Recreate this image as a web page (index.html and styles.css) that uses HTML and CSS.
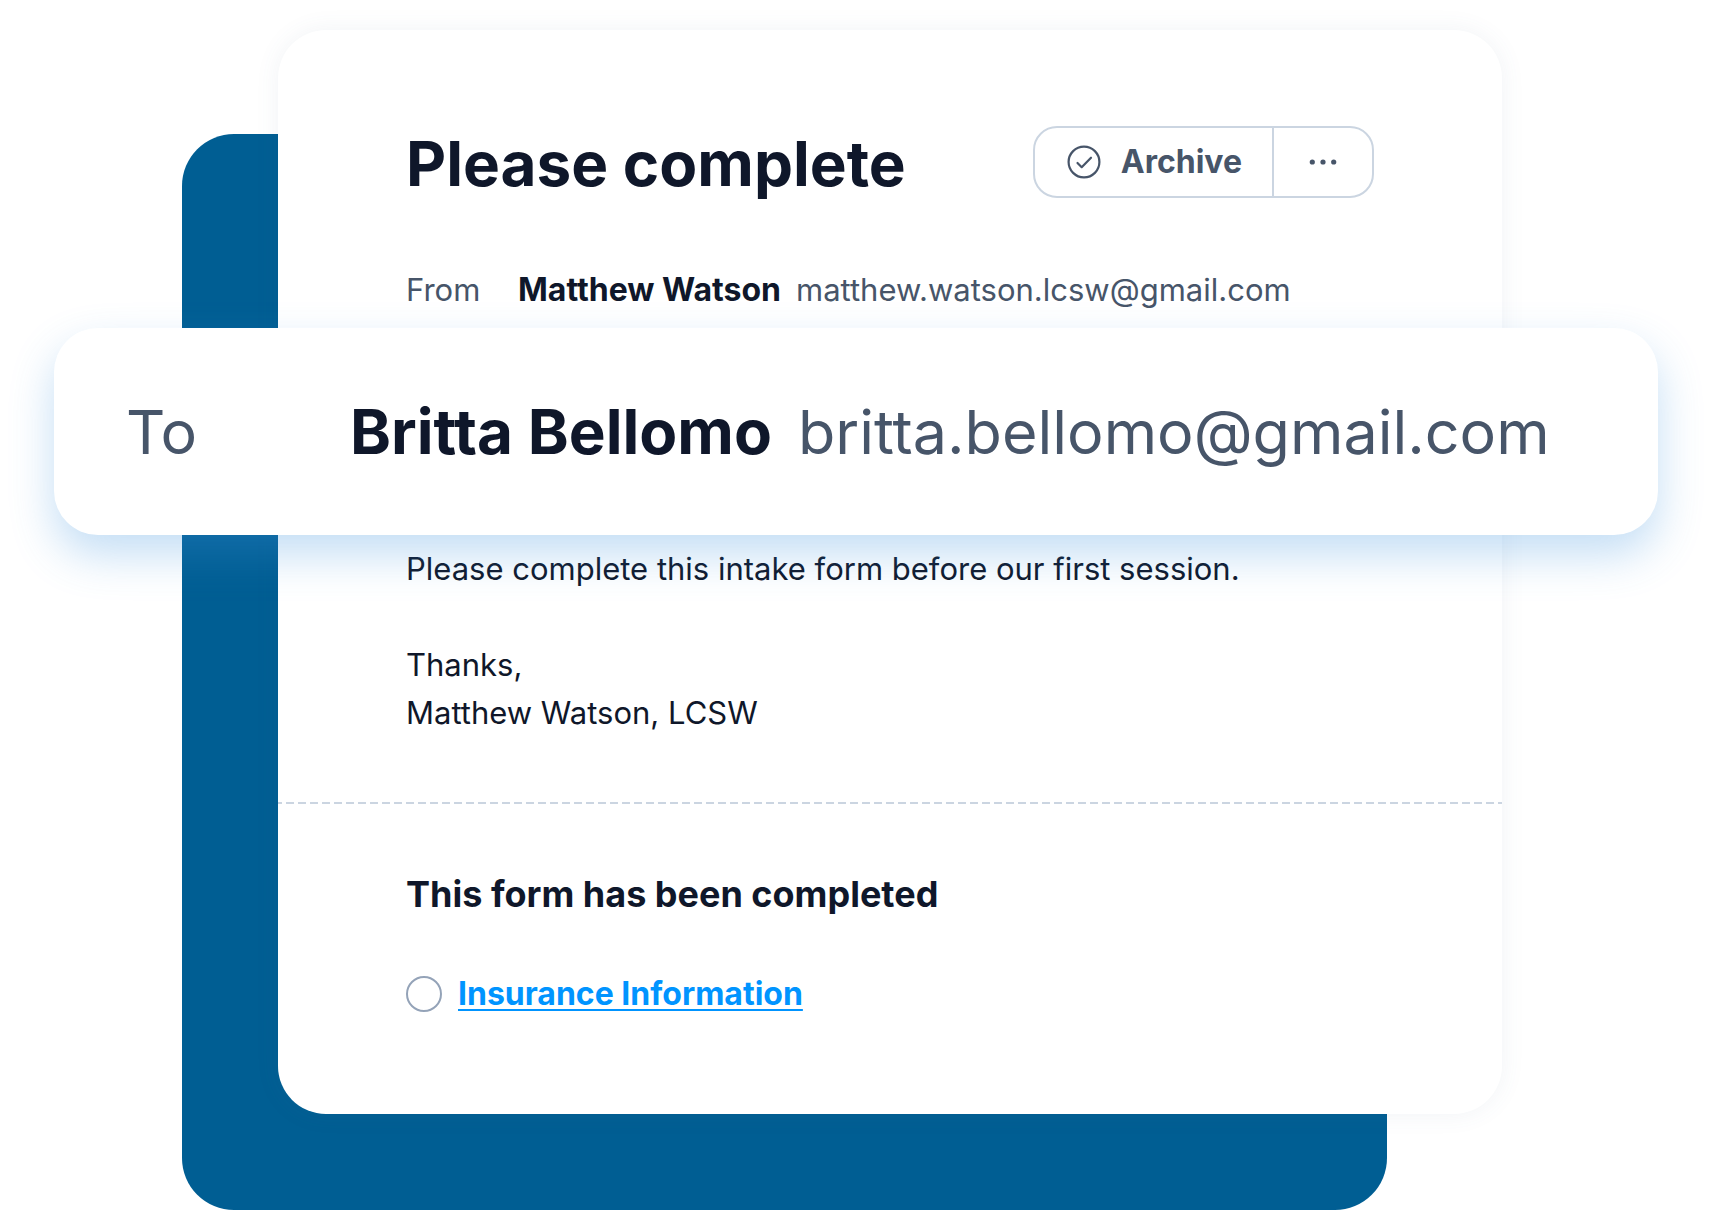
FILE: index.html
```html
<!DOCTYPE html>
<html lang="en">
<head>
  <meta charset="UTF-8">
  <meta name="viewport" content="width=device-width, initial-scale=1.0">
  <title>Please complete</title>
  <link rel="stylesheet" href="styles.css">
</head>
<body>
  <main class="scene">
    <div class="backdrop"></div>

    <article class="card">
      <header class="card-header">
        <h1 class="title">Please complete</h1>
        <div class="actions">
          <button type="button" class="action archive">
            <svg class="icon" viewBox="0 0 34 34" fill="none" stroke="currentColor" stroke-width="2.2" stroke-linecap="round" stroke-linejoin="round" aria-hidden="true">
              <circle cx="17" cy="17" r="15.4"/>
              <path d="M10.5 18l4.2 4.2L24 12.7"/>
            </svg>
            Archive
          </button>
          <button type="button" class="action more" aria-label="More actions">
            <svg class="icon" viewBox="0 0 34 34" fill="currentColor" aria-hidden="true">
              <circle cx="6.3" cy="17" r="2.6"/>
              <circle cx="17" cy="17" r="2.6"/>
              <circle cx="27.7" cy="17" r="2.6"/>
            </svg>
          </button>
        </div>
      </header>

      <div class="person from">
        <span class="label">From</span>
        <strong class="name">Matthew Watson</strong>
        <span class="email">matthew.watson.lcsw@gmail.com</span>
      </div>

      <div class="person to">
        <span class="label">To</span>
        <strong class="name">Britta Bellomo</strong>
        <span class="email">britta.bellomo@gmail.com</span>
      </div>

      <div class="message">
        <p>Please complete this intake form before our first session.</p>
        <p>Thanks,<br>Matthew Watson, LCSW</p>
      </div>

      <svg class="divider" aria-hidden="true">
        <line x1="0" y1="1" x2="100%" y2="1"/>
      </svg>

      <section class="form-status">
        <h2 class="subtitle">This form has been completed</h2>
        <div class="form-item">
          <input type="radio" class="radio" aria-labelledby="form-link">
          <a href="#" id="form-link" class="form-link">Insurance Information</a>
        </div>
      </section>
    </article>
  </main>
</body>
</html>
```
FILE: styles.css
```css
* {
  box-sizing: border-box;
}

body {
  margin: 0;
  background-color: #fff;
  color: #0f172a;
  font-family: Inter, "Liberation Sans", sans-serif;
  font-size: 31px;
  line-height: 48px;
}

h1, h2, p {
  margin: 0;
}

/* The panel and the card share one grid cell */
.scene {
  display: grid;
}

.backdrop,
.card {
  grid-area: 1 / 1;
}

.backdrop {
  margin: 134px 327px 0 182px;
  border-radius: 52px;
  background-color: #005e93;
}

.card {
  margin: 30px 212px 96px 278px;
  padding: 96px 0;
  border-radius: 48px;
  background-color: #fff;
  box-shadow: 0 0 24px rgba(71, 105, 145, 0.08);
}

/* Header */
.card-header {
  display: flex;
  justify-content: space-between;
  align-items: center;
  padding: 0 128px;
}

.title {
  padding-top: 4px;
  font-size: 62px;
  line-height: 68px;
}

.actions {
  display: flex;
  border: 2px solid #cbd5e1;
  border-radius: 24px;
}

.action {
  display: flex;
  align-items: center;
  height: 68px;
  border: 0;
  background: none;
  color: #475569;
  font: inherit;
  font-size: 32px;
  font-weight: 700;
  cursor: pointer;
}

.archive {
  gap: 20px;
  padding: 0 30px 0 32px;
}

.more {
  padding: 0 32px;
  border-left: 2px solid #cbd5e1;
}

.icon {
  width: 34px;
  height: 34px;
}

/* Sender and recipient */
.person {
  display: grid;
  align-items: baseline;
}

.label,
.email {
  color: #475569;
}

.from {
  grid-template-columns: 112px 278px 1fr;
  margin-top: 68px;
  padding: 0 128px;
}

.from .name {
  font-size: 32px;
}

.to {
  position: relative;
  grid-template-columns: 224px 448px 1fr;
  margin: 14px -156px 0 -224px;
  padding: 64px 72px 63px;
  border-radius: 44px;
  background-color: #fff;
  box-shadow: 0 20px 44px rgba(61, 146, 223, 0.3);
  font-size: 61px;
  line-height: 80px;
}

.to .name {
  font-size: 62px;
}

/* Message */
.message {
  display: grid;
  gap: 48px;
  margin-top: 10px;
  padding: 0 128px;
}

.divider {
  display: block;
  width: 100%;
  height: 2px;
  margin-top: 65px;
  stroke: #cbd5e1;
  stroke-width: 2px;
  stroke-dasharray: 8 4;
  stroke-dashoffset: 4px;
}

/* Attached form */
.form-status {
  display: grid;
  gap: 52px;
  margin-top: 66px;
  padding: 0 128px;
}

.subtitle {
  font-size: 36px;
  line-height: 48px;
}

.form-item {
  display: flex;
  align-items: center;
  gap: 16px;
}

.radio {
  appearance: none;
  width: 36px;
  height: 36px;
  margin: 0;
  border: 2px solid #94a3b8;
  border-radius: 50%;
}

.radio:checked {
  background-color: #0094ff;
}

.form-link {
  color: #0094ff;
  font-size: 32px;
  font-weight: 700;
  text-decoration-thickness: 2px;
  text-underline-offset: 4px;
}
```
